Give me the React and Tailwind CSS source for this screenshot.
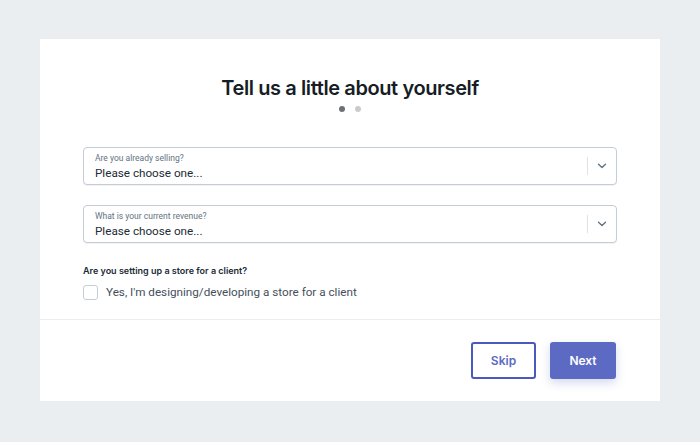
import React from 'react';

function SelectField({ label }) {
  return (
    <div className="flex h-[38px] items-stretch rounded-[4px] border border-[#c4cdd5] bg-white shadow-[0_1px_0_rgba(22,29,37,0.05)]">
      <div className="flex flex-1 flex-col justify-center pl-[11px] pt-[1px]">
        <div className="text-[8.5px] leading-[11px] text-[#637381]">{label}</div>
        <div className="mt-[2px] text-[11.7px] leading-[15px] text-[#212b36]">Please choose one...</div>
      </div>
      <div className="my-[9px] w-px bg-[#dfe3e8]" />
      <div className="flex w-[28px] items-center justify-center">
        <svg width="10" height="6" viewBox="0 0 10 6" fill="none">
          <path d="M1.5 1.2 5 4.5l3.5-3.3" stroke="#637381" strokeWidth="1.4" strokeLinecap="round" strokeLinejoin="round" />
        </svg>
      </div>
    </div>
  );
}

export default function App() {
  return (
    <div className="min-h-[442px] bg-[#ebeef0] pt-[39px] font-['Roboto',Arial,sans-serif]">
      <div className="mx-auto w-[620px] bg-white">
        <div className="px-[43px] pt-[34px] pb-[19px]">
          <h1 className="text-center font-['Inter',sans-serif] text-[20px] font-semibold leading-[30px] tracking-[-0.4px] text-[#161d25]">
            Tell us a little about yourself
          </h1>
          <div className="mt-[3px] flex justify-center gap-[10px]">
            <span className="h-[6px] w-[6px] rounded-full bg-[#6b7177]" />
            <span className="h-[6px] w-[6px] rounded-full bg-[#c9cccf]" />
          </div>
          <div className="mt-[35px] flex flex-col gap-[20px]">
            <SelectField label="Are you already selling?" />
            <SelectField label="What is your current revenue?" />
          </div>
          <div className="mt-[21px] font-['Inter',sans-serif] text-[9px] font-semibold leading-[14px] text-[#212b36]">
            Are you setting up a store for a client?
          </div>
          <label className="mt-[6px] flex items-center gap-[8px]">
            <span className="h-[15px] w-[15px] rounded-[3px] border border-[#c4cdd5] bg-white" />
            <span className="text-[11.7px] leading-[16px] text-[#454f5b]">Yes, I'm designing/developing a store for a client</span>
          </label>
        </div>
        <div className="h-px bg-[#ebeef0]" />
        <div className="flex justify-end gap-[14px] px-[44px] pt-[22px] pb-[22px]">
          <button className="h-[37px] w-[65px] rounded-[3px] border-2 border-[#4959bd] bg-white font-['Inter',sans-serif] text-[12px] font-semibold text-[#5c6ac4]">
            Skip
          </button>
          <button className="h-[37px] w-[66px] rounded-[3px] bg-[#5c6ac4] font-['Inter',sans-serif] text-[12px] font-semibold text-white shadow-[0_4px_10px_rgba(92,106,196,0.25)]">
            Next
          </button>
        </div>
      </div>
    </div>
  );
}
